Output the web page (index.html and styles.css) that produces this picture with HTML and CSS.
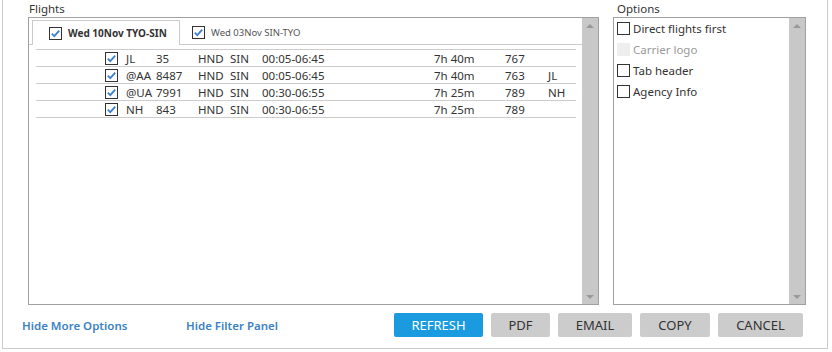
FILE: index.html
```html
<!DOCTYPE html>
<html>
<head>
<meta name="viewport" content="width=device-width, initial-scale=1">
<link rel="stylesheet" href="styles.css">
</head>
<body>

<div class="frame">
  <div class="panels">

    <div class="panel flights">
      <div class="label">Flights</div>
      <div class="box">
        <div class="box-body">
          <div class="tabs">
            <div class="tab active">
              <svg class="cb" width="13" height="13" viewBox="0 0 13 13"><rect x="0.5" y="0.5" width="12" height="12" fill="#fff" stroke="#333"/><path d="M2.8 6.6 L5.3 9.1 L10.2 3.6" fill="none" stroke="#3d7fd6" stroke-width="1.8"/></svg>
              <span>Wed 10Nov TYO-SIN</span>
            </div>
            <div class="tab">
              <svg class="cb" width="13" height="13" viewBox="0 0 13 13"><rect x="0.5" y="0.5" width="12" height="12" fill="#fff" stroke="#333"/><path d="M2.8 6.6 L5.3 9.1 L10.2 3.6" fill="none" stroke="#3d7fd6" stroke-width="1.8"/></svg>
              <span>Wed 03Nov SIN-TYO</span>
            </div>
          </div>

          <div class="rows">
            <div class="row">
              <span></span>
              <svg class="cb" width="13" height="13" viewBox="0 0 13 13"><rect x="0.5" y="0.5" width="12" height="12" fill="#fff" stroke="#333"/><path d="M2.8 6.6 L5.3 9.1 L10.2 3.6" fill="none" stroke="#3d7fd6" stroke-width="1.8"/></svg>
              <span>JL</span><span>35</span><span>HND</span><span>SIN</span><span>00:05-06:45</span><span>7h 40m</span><span>767</span><span></span>
            </div>
            <div class="row">
              <span></span>
              <svg class="cb" width="13" height="13" viewBox="0 0 13 13"><rect x="0.5" y="0.5" width="12" height="12" fill="#fff" stroke="#333"/><path d="M2.8 6.6 L5.3 9.1 L10.2 3.6" fill="none" stroke="#3d7fd6" stroke-width="1.8"/></svg>
              <span>@AA</span><span>8487</span><span>HND</span><span>SIN</span><span>00:05-06:45</span><span>7h 40m</span><span>763</span><span>JL</span>
            </div>
            <div class="row">
              <span></span>
              <svg class="cb" width="13" height="13" viewBox="0 0 13 13"><rect x="0.5" y="0.5" width="12" height="12" fill="#fff" stroke="#333"/><path d="M2.8 6.6 L5.3 9.1 L10.2 3.6" fill="none" stroke="#3d7fd6" stroke-width="1.8"/></svg>
              <span>@UA</span><span>7991</span><span>HND</span><span>SIN</span><span>00:30-06:55</span><span>7h 25m</span><span>789</span><span>NH</span>
            </div>
            <div class="row">
              <span></span>
              <svg class="cb" width="13" height="13" viewBox="0 0 13 13"><rect x="0.5" y="0.5" width="12" height="12" fill="#fff" stroke="#333"/><path d="M2.8 6.6 L5.3 9.1 L10.2 3.6" fill="none" stroke="#3d7fd6" stroke-width="1.8"/></svg>
              <span>NH</span><span>843</span><span>HND</span><span>SIN</span><span>00:30-06:55</span><span>7h 25m</span><span>789</span><span></span>
            </div>
          </div>
        </div>
        <div class="scroll"><span class="up"></span><span class="down"></span></div>
      </div>
    </div>

    <div class="panel options">
      <div class="label">Options</div>
      <div class="box">
        <div class="box-body">
          <div class="opt"><span class="box-cb"></span>Direct flights first</div>
          <div class="opt disabled"><span class="box-cb"></span>Carrier logo</div>
          <div class="opt"><span class="box-cb"></span>Tab header</div>
          <div class="opt"><span class="box-cb"></span>Agency Info</div>
        </div>
        <div class="scroll"><span class="up"></span><span class="down"></span></div>
      </div>
    </div>

  </div>

  <div class="actions">
    <a class="link more">Hide More Options</a>
    <a class="link filter">Hide Filter Panel</a>
    <div class="buttons">
      <button class="btn primary refresh">REFRESH</button>
      <button class="btn pdf">PDF</button>
      <button class="btn email">EMAIL</button>
      <button class="btn copy">COPY</button>
      <button class="btn cancel">CANCEL</button>
    </div>
  </div>
</div>

</body>
</html>
```

FILE: styles.css
```css
body {
    margin: 0;
    font-family: "Noto Sans", "Open Sans", sans-serif;
    color: #333;
    background: #fff;
}

/* outer frame, top is cut off */
.frame {
    margin-left: 2px;
    width: 826px;
    height: 349px;
    border: 1px solid #ccc;
    border-top: none;
    box-sizing: border-box;
    display: flex;
    flex-direction: column;
}

.panels {
    display: flex;
    gap: 14px;
    padding-left: 25px;
}

.label {
    font-size: 11.5px;
    line-height: 17px;
    height: 17px;
    padding-left: 1px;
}

.options .label { padding-left: 4px; }

.box {
    display: flex;
    height: 288px;
    border: 1px solid #a0a0a0;
    box-sizing: border-box;
}

.box-body {
    flex: 1;
    min-width: 0;
}

.flights .box { width: 571px; }
.options .box { width: 193px; }

/* fake scrollbar */
.scroll {
    width: 16px;
    background: #c8c8c8;
    display: flex;
    flex-direction: column;
    justify-content: space-between;
    align-items: center;
    padding: 6px 0 5px;
    box-sizing: border-box;
}

.scroll .up, .scroll .down {
    width: 0;
    height: 0;
    border-left: 4px solid transparent;
    border-right: 4px solid transparent;
}

.scroll .up { border-bottom: 4px solid #999; }
.scroll .down { border-top: 4px solid #999; }

/* tabs */
.tabs {
    display: flex;
    margin-top: 2px;
    padding-left: 3px;
    height: 24px;
    border-bottom: 1px solid #ccc;
}

.tab {
    display: flex;
    align-items: center;
    gap: 6px;
    padding: 0 12px;
    font-size: 9.5px;
    color: #555;
}

.tab.active {
    width: 148px;
    padding: 0 0 0 16px;
    border: 1px solid #ccc;
    border-bottom: none;
    background: #fff;
    height: 25px;
    box-sizing: border-box;
    font-weight: bold;
    color: #333;
    font-size: 10px;
}

.cb { display: block; flex: none; }

/* flight rows */
.rows {
    margin: 4px 6px 0 7px;
    border-top: 1px solid #ccc;
}

.row {
    display: grid;
    grid-template-columns: 69px 21px 30px 42px 32px 32px 172px 71px 43px 1fr;
    align-items: center;
    height: 17px;
    border-bottom: 1px solid #ccc;
    font-size: 11.5px;
    box-sizing: border-box;
}

/* options list */
.opt {
    display: flex;
    align-items: center;
    gap: 3px;
    height: 21px;
    padding-left: 3px;
    font-size: 11.5px;
}

.box-cb {
    width: 13px;
    height: 13px;
    border: 1px solid #333;
    box-sizing: border-box;
    background: #fff;
}

.opt.disabled { color: #999; }
.opt.disabled .box-cb {
    border: none;
    background: #eee;
}

/* bottom bar */
.actions {
    display: flex;
    align-items: center;
    margin-top: 8px;
    height: 24px;
    padding-left: 19px;
}

.link {
    color: #3b82c4;
    font-size: 11.5px;
    font-weight: 600;
    cursor: pointer;
}

.link.more { width: 164px; }

.buttons {
    display: flex;
    gap: 8px;
    margin-left: auto;
    margin-right: 24px;
}

.btn {
    height: 24px;
    border: none;
    border-radius: 2px;
    background: #cccccc;
    color: #333;
    font-family: inherit;
    font-size: 13px;
    padding: 0;
}

.btn.primary {
    background: #1a9be0;
    color: #fff;
}

.refresh { width: 89px; }
.pdf { width: 59px; }
.email { width: 74px; }
.copy { width: 70px; }
.cancel { width: 85px; }
```
